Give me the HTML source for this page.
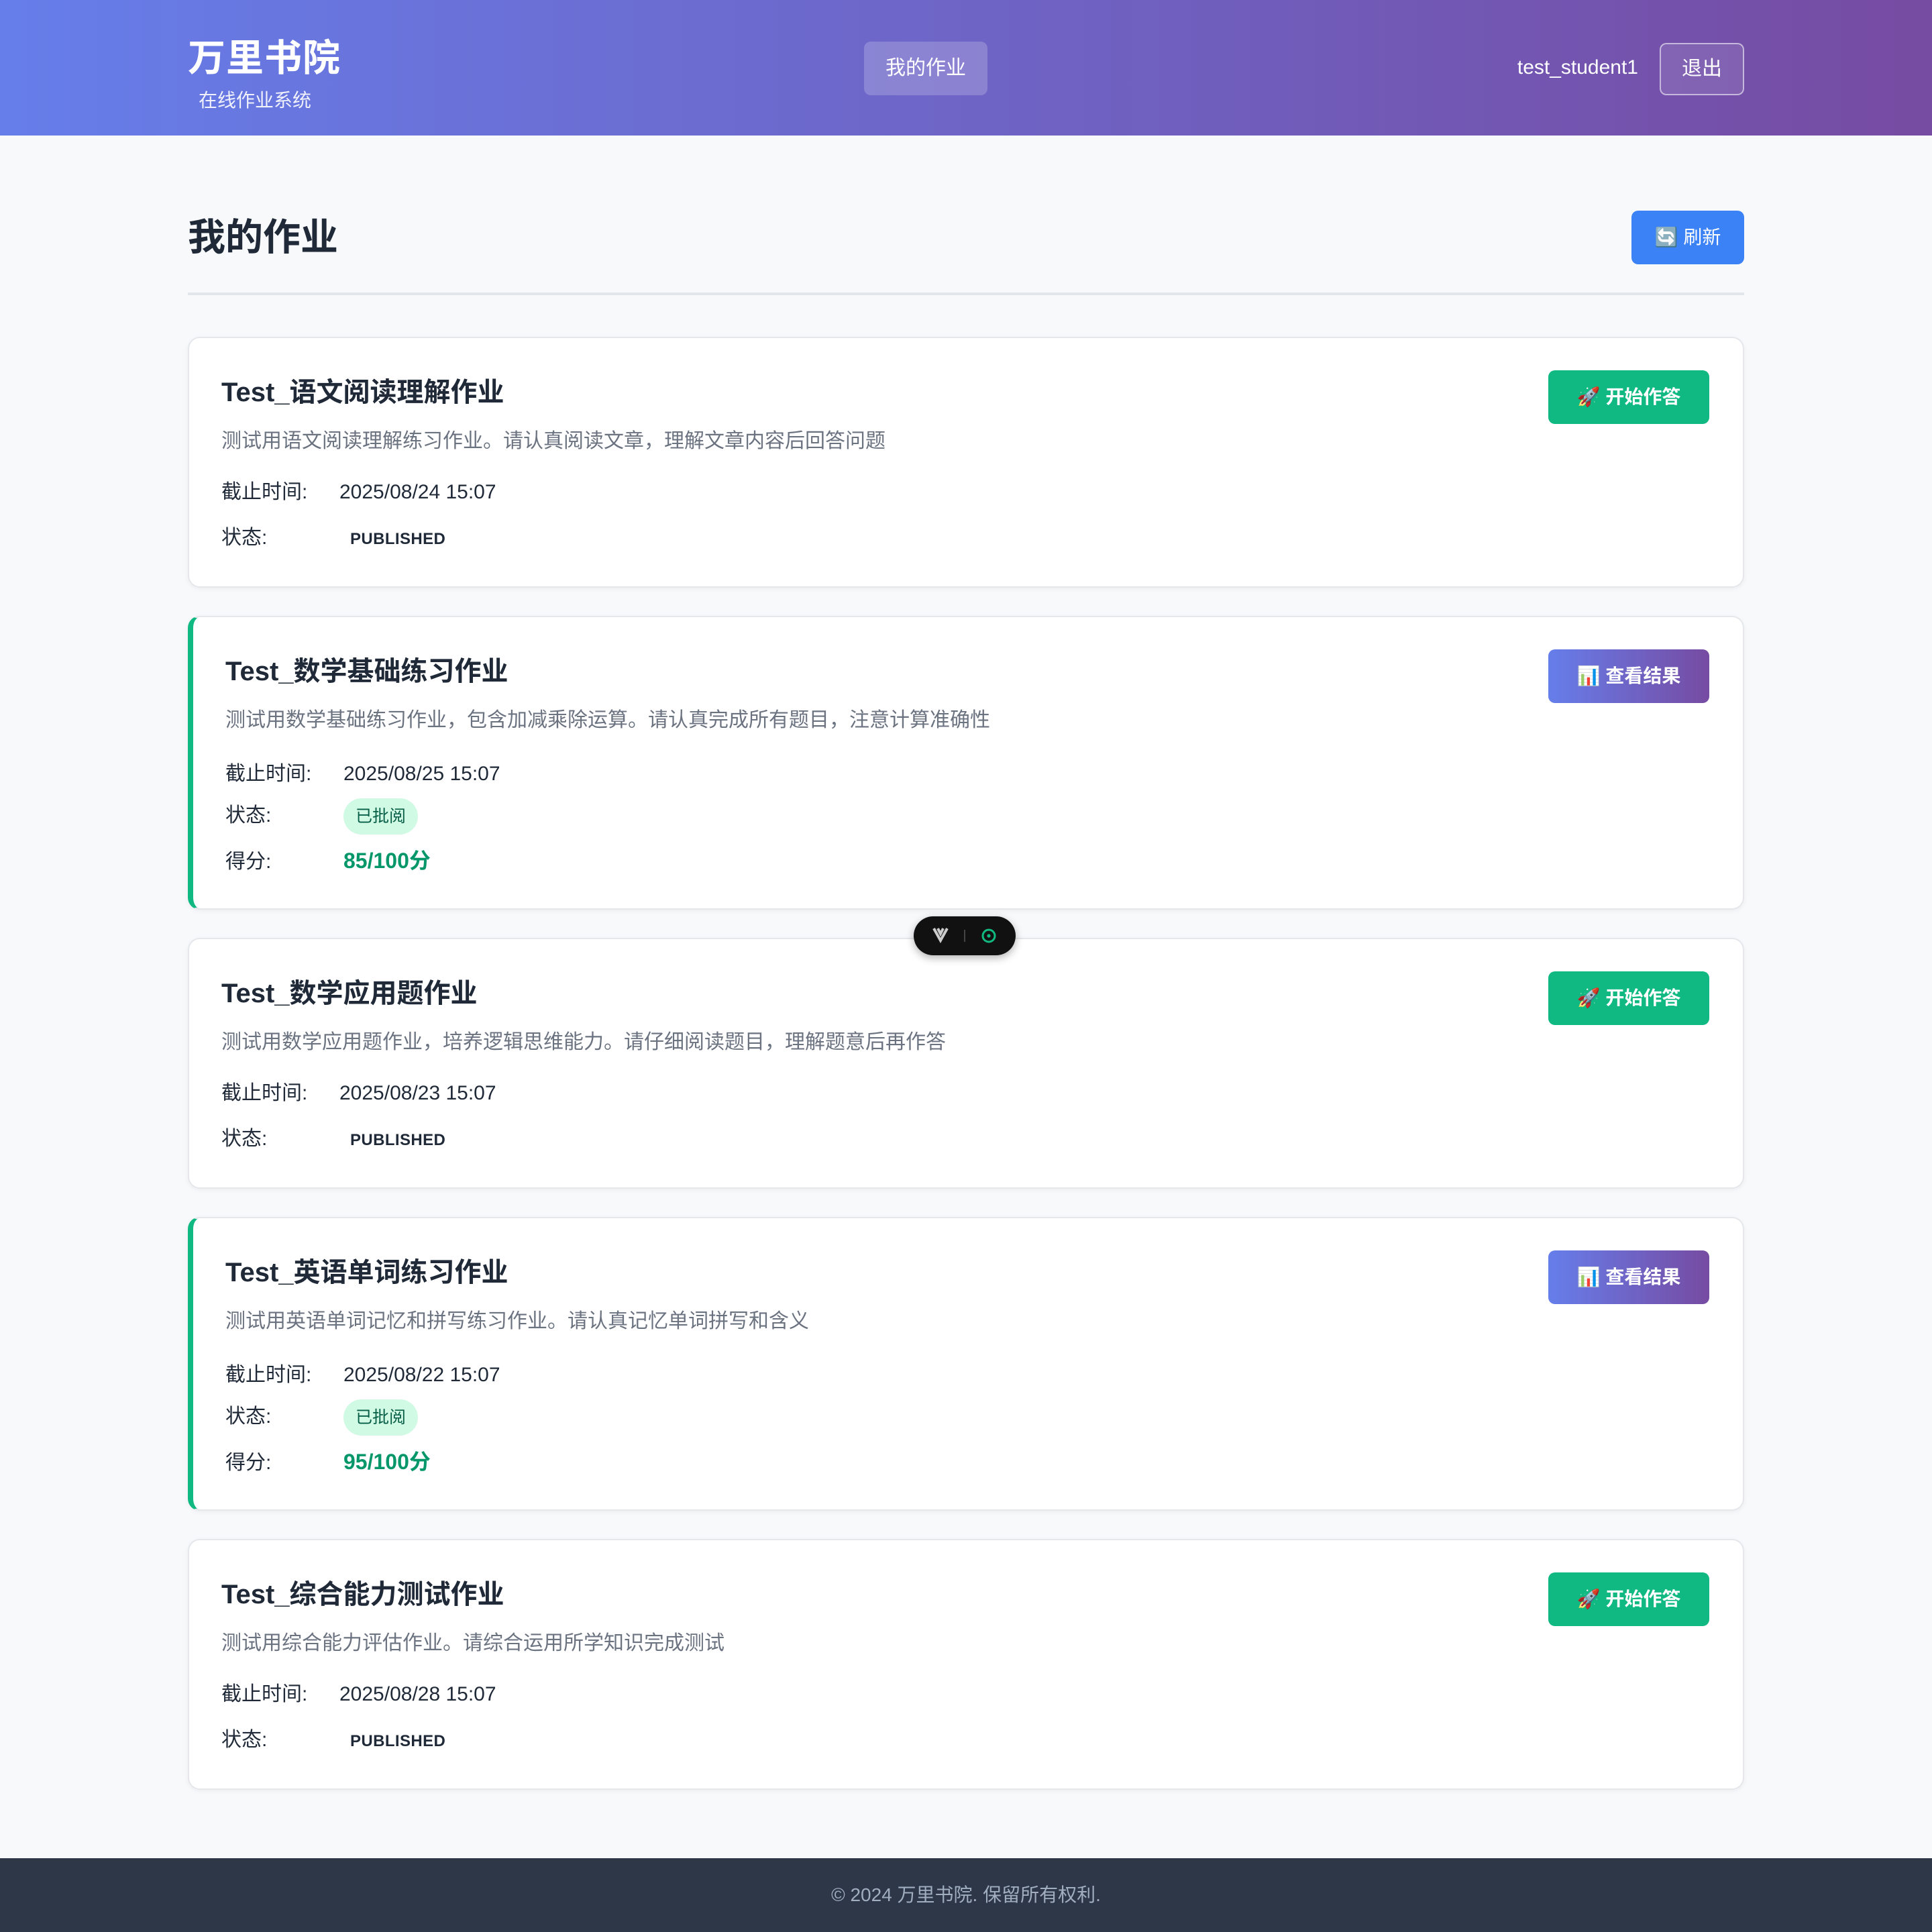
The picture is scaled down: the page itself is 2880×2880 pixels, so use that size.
<!DOCTYPE html>
<html><head><meta charset="utf-8">
<style>
html,body{margin:0;padding:0}
body{width:1440px;height:1440px;position:relative;zoom:2;background:#f8f9fb;font-family:"Liberation Sans","Noto Sans CJK SC",sans-serif;color:#1f2937;overflow:hidden}
.hdr{height:101px;background:linear-gradient(90deg,#667eea,#764ba2);position:relative;color:#fff}
.logo{position:absolute;left:140px;top:21px;font-size:28px;font-weight:700;letter-spacing:0.5px}
.sub{position:absolute;left:148px;top:64px;font-size:14px;opacity:.9}
.nav{position:absolute;left:644px;top:31px;width:92px;height:40px;background:rgba(255,255,255,.2);border-radius:5px;font-size:15px;line-height:40px;text-align:center}
.user{position:absolute;right:219px;top:42px;font-size:15px}
.out{position:absolute;left:1237px;top:32px;width:61px;height:37px;border:1px solid rgba(255,255,255,.55);border-radius:5px;background:rgba(255,255,255,.1);font-size:15px;line-height:37px;text-align:center}
.wrap{position:relative;width:1160px;margin:0 auto;padding-top:54px}
h1{margin:0;font-size:28px;line-height:44px;font-weight:700;color:#1f2937}
.ref{position:absolute;right:0;top:56px;width:84px;height:40px;background:#3b82f6;color:#fff;border-radius:5px;font-size:14px;line-height:40px;text-align:center}
.hr{height:2px;background:#e2e5ea;margin-top:19px;margin-bottom:31px}
.card{position:relative;background:#fff;border:1px solid #e5e7eb;border-radius:9px;box-shadow:0 1px 4px rgba(0,0,0,.05);padding:0 24px;height:187px;margin-bottom:21px;box-sizing:border-box}
.card.g{border-left:4px solid #10b981;height:219px;padding-left:24px}
.t{position:absolute;top:24px;font-size:20px;font-weight:700;color:#1f2937}
.d{position:absolute;top:64px;font-size:15px;color:#6b7280}
.row{position:absolute;font-size:15px;color:#1f2937}
.row .l{display:inline-block;width:88px}
.pub{font-size:12px;font-weight:700;letter-spacing:.2px;margin-left:8px}
.bd{display:inline-block;background:#d1fae5;color:#065f46;border-radius:14px;font-size:12.5px;padding:0 9px;height:27px;line-height:27px}
.sc{color:#059669;font-weight:700;font-size:16px}
.btn{position:absolute;right:25px;top:24px;width:120px;height:40px;border-radius:5px;color:#fff;font-size:14px;font-weight:700;line-height:40px;text-align:center}
.st{background:#10b981}
.vw{background:linear-gradient(90deg,#667eea,#764ba2)}
.ft{position:absolute;left:0;top:1385px;width:1440px;height:55px;background:#2d3748;color:#a0aec0;text-align:center;line-height:55px;font-size:14px}
.vue{position:absolute;z-index:10;left:681px;width:76px;height:29px;background:#111;border-radius:15px;top:683px;box-shadow:0 2px 6px rgba(0,0,0,.3)}
</style></head><body>
<div class="hdr">
<div class="logo">万里书院</div><div class="sub">在线作业系统</div>
<div class="nav">我的作业</div>
<div class="user">test_student1</div>
<div class="out">退出</div>
</div>
<div class="vue"><svg width="76" height="29"><path d="M15 9 L20 18 L25 9 M18 9 L20 13 L22 9" stroke="#ccc" stroke-width="2" fill="none"/><line x1="38" y1="10" x2="38" y2="19" stroke="#444"/><circle cx="56" cy="14.5" r="4.5" stroke="#10b981" stroke-width="1.5" fill="none"/><circle cx="56" cy="14.5" r="1.3" fill="#10b981"/></svg></div>
<div class="wrap">
<h1>我的作业</h1><div class="ref">🔄 刷新</div>
<div class="hr"></div>

<div class="card"><div class="t">Test_语文阅读理解作业</div><div class="d">测试用语文阅读理解练习作业。请认真阅读文章，理解文章内容后回答问题</div>
<div class="row" style="top:102px"><span class="l">截止时间:</span>2025/08/24 15:07</div>
<div class="row" style="top:136px"><span class="l">状态:</span><span class="pub">PUBLISHED</span></div>
<div class="btn st">🚀 开始作答</div></div>

<div class="card g"><div class="t">Test_数学基础练习作业</div><div class="d">测试用数学基础练习作业，包含加减乘除运算。请认真完成所有题目，注意计算准确性</div>
<div class="row" style="top:104px"><span class="l">截止时间:</span>2025/08/25 15:07</div>
<div class="row" style="top:135px"><span class="l">状态:</span><span class="bd">已批阅</span></div>
<div class="row" style="top:169px"><span class="l">得分:</span><span class="sc">85/100分</span></div>
<div class="btn vw">📊 查看结果</div></div>

<div class="card"><div class="t">Test_数学应用题作业</div><div class="d">测试用数学应用题作业，培养逻辑思维能力。请仔细阅读题目，理解题意后再作答</div>
<div class="row" style="top:102px"><span class="l">截止时间:</span>2025/08/23 15:07</div>
<div class="row" style="top:136px"><span class="l">状态:</span><span class="pub">PUBLISHED</span></div>
<div class="btn st">🚀 开始作答</div></div>

<div class="card g"><div class="t">Test_英语单词练习作业</div><div class="d">测试用英语单词记忆和拼写练习作业。请认真记忆单词拼写和含义</div>
<div class="row" style="top:104px"><span class="l">截止时间:</span>2025/08/22 15:07</div>
<div class="row" style="top:135px"><span class="l">状态:</span><span class="bd">已批阅</span></div>
<div class="row" style="top:169px"><span class="l">得分:</span><span class="sc">95/100分</span></div>
<div class="btn vw">📊 查看结果</div></div>

<div class="card"><div class="t">Test_综合能力测试作业</div><div class="d">测试用综合能力评估作业。请综合运用所学知识完成测试</div>
<div class="row" style="top:102px"><span class="l">截止时间:</span>2025/08/28 15:07</div>
<div class="row" style="top:136px"><span class="l">状态:</span><span class="pub">PUBLISHED</span></div>
<div class="btn st">🚀 开始作答</div></div>
</div>
<div class="ft">© 2024 万里书院. 保留所有权利.</div>
</body></html>
